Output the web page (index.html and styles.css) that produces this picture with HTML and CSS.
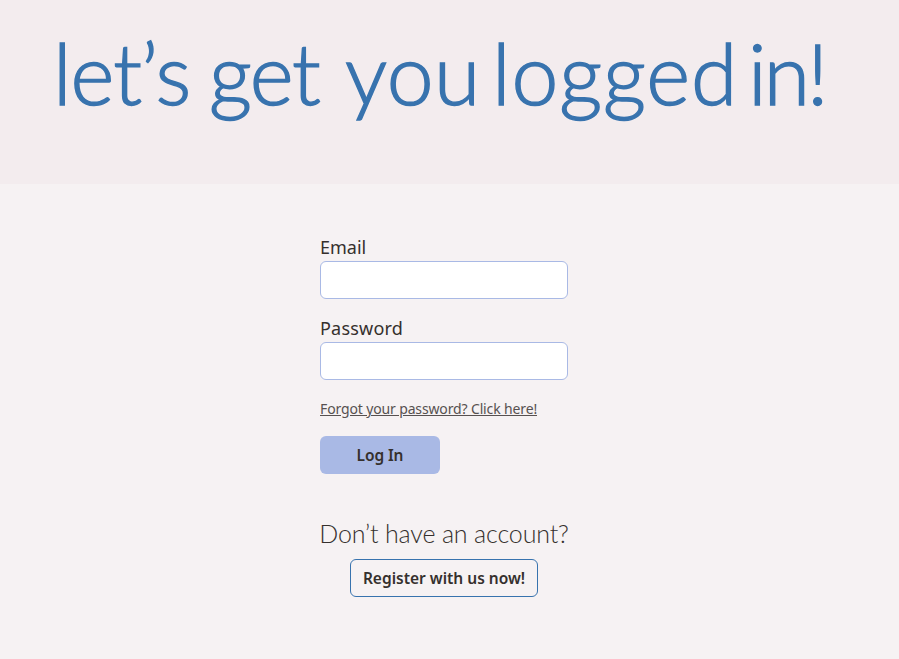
FILE: index.html
```html
<!DOCTYPE html>
<html lang="en">
<head>
<meta charset="utf-8">
<title>Log in</title>
<link rel="stylesheet" href="styles.css">
</head>
<body>
<header class="hero"><h1 class="hero-title"><span class="w1">let’s</span> <span class="w2">get</span> <span class="w3">you</span> <span class="w4">logged</span> <span class="w5">in!</span></h1></header>
<main class="login">
<form class="form">
<label class="label" for="email">Email</label>
<input class="input" id="email" type="email">
<label class="label label-password" for="password">Password</label>
<input class="input" id="password" type="password">
<a class="forgot" href="#">Forgot your password? Click here!</a>
<button class="submit" type="button">Log In</button>
</form>
<section class="signup">
<h2 class="signup-title">Don’t have an account?</h2>
<a class="register" href="#">Register with us now!</a>
</section>
</main>
</body>
</html>
```
FILE: styles.css
```css
* { box-sizing: border-box; }
body { margin: 0; min-height: 659px; background: #f6f2f3; color: #35302d; font-family: "Noto Sans", sans-serif; }
.hero { height: 184px; padding: 23px 0 0 53px; background: #f3ecee; }
.hero-title { display: grid; grid-template-columns: 156px 136px 147px 256px 100px; margin: 0; color: #3873ae; font: 300 84px/100px Lato, sans-serif; white-space: nowrap; -webkit-text-stroke: 1.4px #3873ae; }
.w1 { letter-spacing: -1px; }
.w2 { letter-spacing: -1.5px; }
.w3 { letter-spacing: 0.5px; }
.w4 { letter-spacing: 1px; }
.w5 { letter-spacing: -3px; }
.login { width: 248px; margin: 0 0 0 320px; padding-top: 50px; }
.form { display: flex; flex-direction: column; align-items: flex-start; }
.label { height: 27px; font-size: 18px; line-height: 26px; }
.label-password { letter-spacing: 0.2px; }
.input { width: 248px; height: 38px; margin: 0 0 16px; padding: 0 12px; background: #fff; border: 1px solid #a9b9e5; border-radius: 6px; font-size: 16px; }
.forgot { margin-top: 3px; font-size: 14px; line-height: 20px; letter-spacing: -0.14px; color: #575150; white-space: nowrap; }
.submit { width: 120px; height: 38px; margin-top: 17px; padding: 0; border: 0; border-radius: 6px; background: #a9b9e5; color: #35302d; font: 600 15.5px "Noto Sans", sans-serif; letter-spacing: -0.1px; }
.signup { display: flex; flex-direction: column; align-items: center; margin-top: 42px; }
.signup-title { margin: 0 0 9px; font: 300 25px/34px Lato, sans-serif; letter-spacing: -0.15px; white-space: nowrap; }
.register { width: 188px; height: 38px; border: 1px solid #3873ae; border-radius: 6px; color: #35302d; font-size: 15.5px; font-weight: 600; line-height: 37px; text-align: center; text-decoration: none; white-space: nowrap; }
```
